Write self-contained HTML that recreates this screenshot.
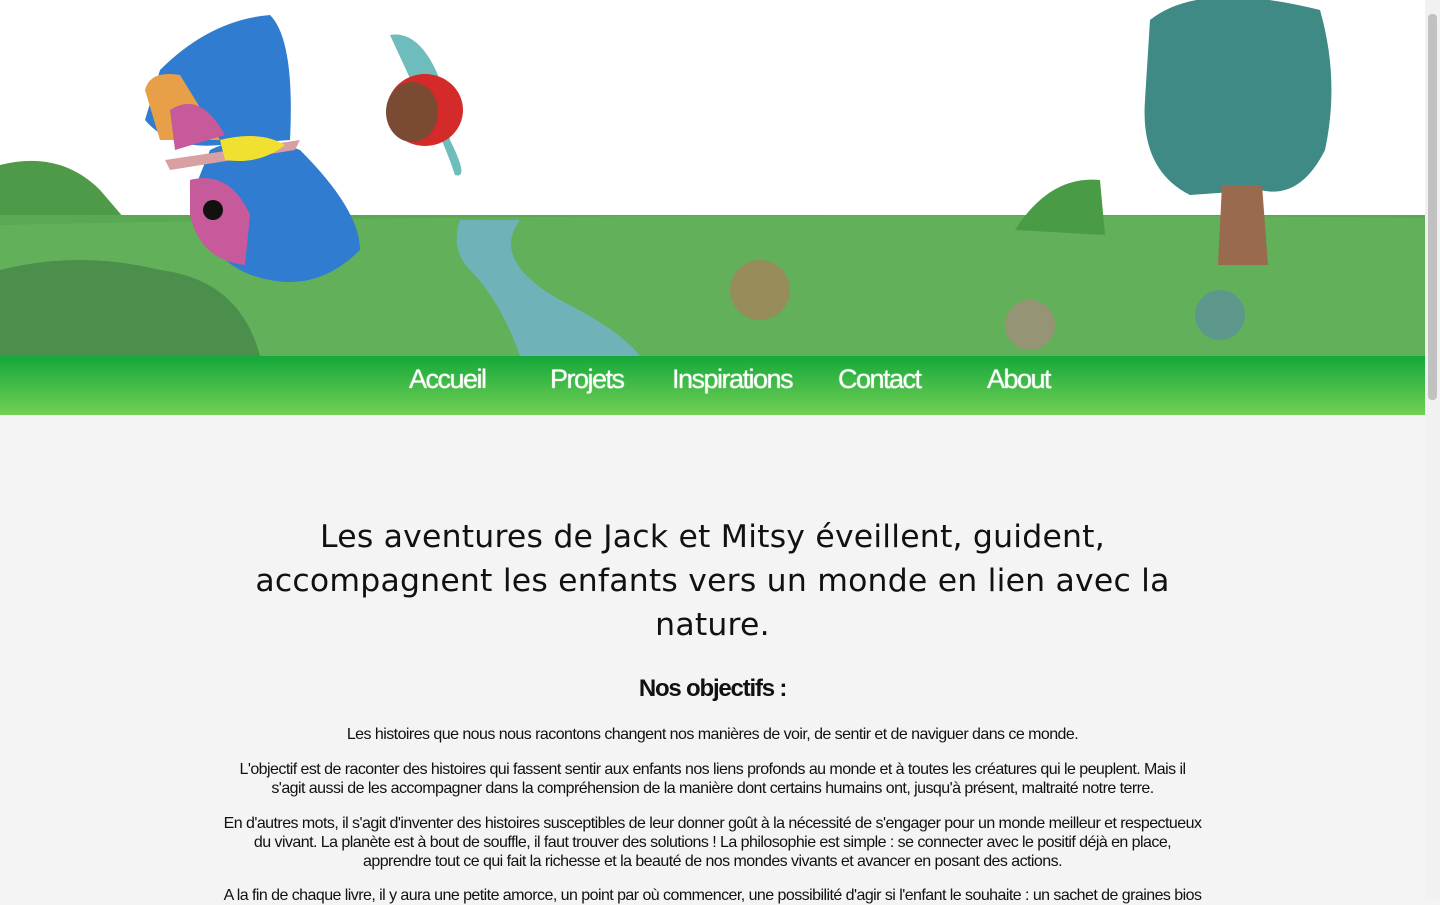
<!DOCTYPE html>
<html><head><meta charset="utf-8"><style>
html,body{margin:0;padding:0}
body{width:1440px;height:900px;overflow:hidden;background:#f4f4f4;font-family:"Liberation Sans",sans-serif;position:relative}
.page{position:absolute;left:0;top:0;width:1425px;height:900px}
.hdr{position:absolute;left:0;top:0;width:1425px;height:356px;background:#fff;overflow:hidden}
nav{position:absolute;left:0;top:356px;width:1425px;height:59px;background:linear-gradient(#14a83a,#72cf55)}
nav a{position:absolute;top:8px;color:#fff;font-size:27px;letter-spacing:-1.5px;text-decoration:none;text-shadow:0 0 1px #fff}
.sb{position:absolute;left:1425px;top:0;width:15px;height:900px;background:#f1f1f1}
.sb div{position:absolute;left:3px;top:14px;width:9px;height:386px;background:#c1c1c1;border-radius:4px}
h1{position:absolute;left:230px;width:965px;top:515px;margin:0;text-align:center;font-family:"DejaVu Sans",sans-serif;font-weight:normal;font-size:31.5px;line-height:44px;color:#111;letter-spacing:0.2px}
h2{position:absolute;left:0;width:1425px;top:675px;margin:0;text-align:center;font-size:24px;letter-spacing:-1.2px;color:#111}
p{position:absolute;left:222px;width:981px;margin:0;text-align:center;font-size:16px;line-height:19px;letter-spacing:-0.55px;color:#111}
</style></head><body>
<div class="page">
<div class="hdr">
<svg width="1425" height="356" viewBox="0 0 1425 356">
<path d="M0 165 Q60 150 100 190 L130 225 L0 230Z" fill="#4e9a48"/>
<rect x="0" y="215" width="1425" height="141" fill="#5aa854"/>
<path d="M0 225 Q700 210 1425 218 L1425 356 L0 356Z" fill="#62b05a"/>
<path d="M0 270 Q80 250 160 270 Q240 280 260 356 L0 356Z" fill="#4c8f4c"/>
<path d="M460 220 L520 220 Q490 260 560 300 Q620 330 640 356 L520 356 Q500 300 470 270 Q450 250 460 220Z" fill="#6fb3b8"/>
<path d="M1150 20 Q1200 -20 1320 10 Q1340 80 1325 150 Q1300 200 1260 190 L1190 195 Q1140 170 1145 100Z" fill="#3f8a84"/>
<path d="M1222 185 L1262 185 L1268 265 L1218 265Z" fill="#9a6a4f"/>
<path d="M1015 230 Q1050 175 1100 180 L1105 235Z" fill="#4a9b45"/>
<circle cx="760" cy="290" r="30" fill="#c96a5a" opacity=".5"/>
<circle cx="1030" cy="325" r="25" fill="#c87a90" opacity=".5"/>
<circle cx="1220" cy="315" r="25" fill="#5a7fc0" opacity=".5"/>
<path d="M160 70 Q210 20 270 15 Q295 40 290 140 L220 145 Q170 150 145 120Z" fill="#2f7cd0"/>
<path d="M145 90 Q150 70 180 75 L220 140 L160 140Z" fill="#e8a048"/>
<path d="M170 110 Q200 90 225 135 L175 150Z" fill="#c75a9a"/>
<path d="M210 150 Q250 130 300 150 Q360 210 360 250 Q320 290 270 280 Q210 270 190 200Z" fill="#2f7cd0"/>
<path d="M190 180 Q230 170 250 215 L245 265 Q200 260 190 215Z" fill="#c75a9a"/>
<path d="M165 160 L300 140 L295 150 L170 170Z" fill="#d8a0a0"/>
<path d="M220 140 Q260 130 285 145 Q260 165 225 160Z" fill="#f0e030"/>
<circle cx="213" cy="210" r="10" fill="#111"/>
<path d="M390 35 Q420 30 440 80 L450 140 Q470 180 455 175 Q440 130 420 100Z" fill="#6fbcbc"/>
<ellipse cx="425" cy="110" rx="38" ry="36" fill="#d42a2a"/>
<ellipse cx="412" cy="112" rx="26" ry="30" fill="#7a4a32"/>
</svg>
</div>
<nav>
<a style="left:409px">Accueil</a><a style="left:550px">Projets</a><a style="left:672px">Inspirations</a><a style="left:838px">Contact</a><a style="left:987px">About</a>
</nav>
<h1>Les aventures de Jack et Mitsy éveillent, guident, accompagnent les enfants vers un monde en lien avec la nature.</h1>
<h2>Nos objectifs :</h2>
<p style="top:725px">Les histoires que nous nous racontons changent nos manières de voir, de sentir et de naviguer dans ce monde.</p>
<p style="top:760px">L'objectif est de raconter des histoires qui fassent sentir aux enfants nos liens profonds au monde et à toutes les créatures qui le peuplent. Mais il s'agit aussi de les accompagner dans la compréhension de la manière dont certains humains ont, jusqu'à présent, maltraité notre terre.</p>
<p style="top:814px">En d'autres mots, il s'agit d'inventer des histoires susceptibles de leur donner goût à la nécessité de s'engager pour un monde meilleur et respectueux du vivant. La planète est à bout de souffle, il faut trouver des solutions ! La philosophie est simple : se connecter avec le positif déjà en place, apprendre tout ce qui fait la richesse et la beauté de nos mondes vivants et avancer en posant des actions.</p>
<p style="top:886px">A la fin de chaque livre, il y aura une petite amorce, un point par où commencer, une possibilité d'agir si l'enfant le souhaite : un sachet de graines bios</p>
</div>
<div class="sb"><div></div></div>
</body></html>
